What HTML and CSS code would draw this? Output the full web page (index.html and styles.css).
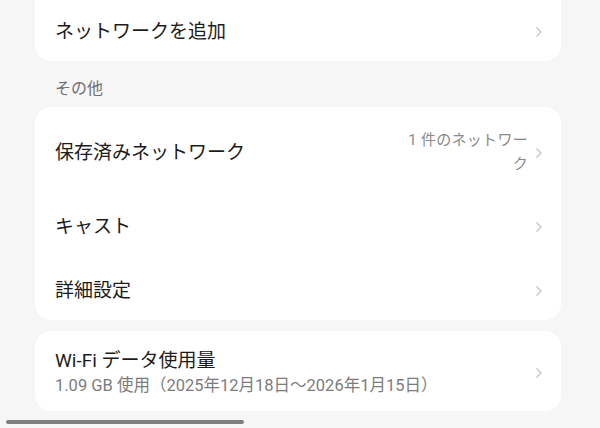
FILE: index.html
```html
<!DOCTYPE html>
<html lang="ja">
<head>
<meta charset="utf-8">
<link rel="stylesheet" href="styles.css">
</head>
<body>
<div class="page">
  <div class="card card-top">
    <div class="row row-first">
      <span class="title">ネットワークを追加</span>
      <span class="chev"><svg width="8" height="12" viewBox="0 0 8 12"><path d="M1.5 1.5 L6 6 L1.5 10.5" fill="none" stroke="#c4c4c4" stroke-width="1.3"/></svg></span>
    </div>
  </div>

  <div class="section">その他</div>

  <div class="card">
    <div class="row row-tall">
      <span class="title">保存済みネットワーク</span>
      <span class="value">1 件のネットワーク</span>
      <span class="chev"><svg width="8" height="12" viewBox="0 0 8 12"><path d="M1.5 1.5 L6 6 L1.5 10.5" fill="none" stroke="#c4c4c4" stroke-width="1.3"/></svg></span>
    </div>
    <div class="row row-mid">
      <span class="title">キャスト</span>
      <span class="chev"><svg width="8" height="12" viewBox="0 0 8 12"><path d="M1.5 1.5 L6 6 L1.5 10.5" fill="none" stroke="#c4c4c4" stroke-width="1.3"/></svg></span>
    </div>
    <div class="row row-last">
      <span class="title">詳細設定</span>
      <span class="chev"><svg width="8" height="12" viewBox="0 0 8 12"><path d="M1.5 1.5 L6 6 L1.5 10.5" fill="none" stroke="#c4c4c4" stroke-width="1.3"/></svg></span>
    </div>
  </div>

  <div class="card card-usage">
    <div class="row row-usage">
      <div class="texts">
        <span class="title">Wi-Fi データ使用量</span>
        <span class="sub">1.09 GB 使用（2025年12月18日～2026年1月15日）</span>
      </div>
      <span class="chev"><svg width="8" height="12" viewBox="0 0 8 12"><path d="M1.5 1.5 L6 6 L1.5 10.5" fill="none" stroke="#c4c4c4" stroke-width="1.3"/></svg></span>
    </div>
  </div>
</div>
<div class="scrollbar"></div>
</body>
</html>
```

FILE: styles.css
```css
html, body {
  margin: 0;
  padding: 0;
  background: #f6f6f6;
  font-family: Roboto, "Noto Sans CJK JP", sans-serif;
  color: #1c1c1c;
  overflow: hidden;
}

.page {
  padding: 0 39px 0 35px;
  display: flex;
  flex-direction: column;
}

.card {
  background: #ffffff;
  border-radius: 16px;
  display: flex;
  flex-direction: column;
}

.card-top {
  margin-top: -20px;
}

.row {
  display: flex;
  align-items: center;
  padding: 0 18px 0 20px;
  box-sizing: border-box;
}

.row-first {
  height: 81px;
  padding-top: 22px;
}

.row-tall {
  height: 86px;
  padding-top: 6px;
}

.row-mid {
  height: 65px;
  padding-top: 2px;
}

.row-last {
  height: 62px;
  padding-top: 4px;
}

.title {
  font-size: 19px;
  line-height: 24px;
  flex: 1;
  white-space: nowrap;
}

.value {
  font-size: 15px;
  line-height: 24px;
  color: #8a8a8a;
  text-align: right;
  width: 120px;
  margin-right: 5px;
  margin-top: -2px;
  letter-spacing: 0.3px;
}

.chev {
  width: 8px;
  height: 12px;
  display: flex;
  margin-left: 2px;
}

.section {
  font-size: 16px;
  line-height: 22px;
  color: #6e6e6e;
  padding: 17px 20px 7px;
}

.card-usage {
  margin-top: 11px;
}

.row-usage {
  height: 80px;
  padding-top: 4px;
}

.texts {
  flex: 1;
  display: flex;
  flex-direction: column;
  gap: 2px;
}

.sub {
  font-size: 16.5px;
  line-height: 22px;
  color: #7c7c7c;
  white-space: nowrap;
}

.scrollbar {
  margin: 9px 0 0 6px;
  width: 238px;
  height: 4px;
  border-radius: 2px;
  background: #7e7e7e;
}
```
